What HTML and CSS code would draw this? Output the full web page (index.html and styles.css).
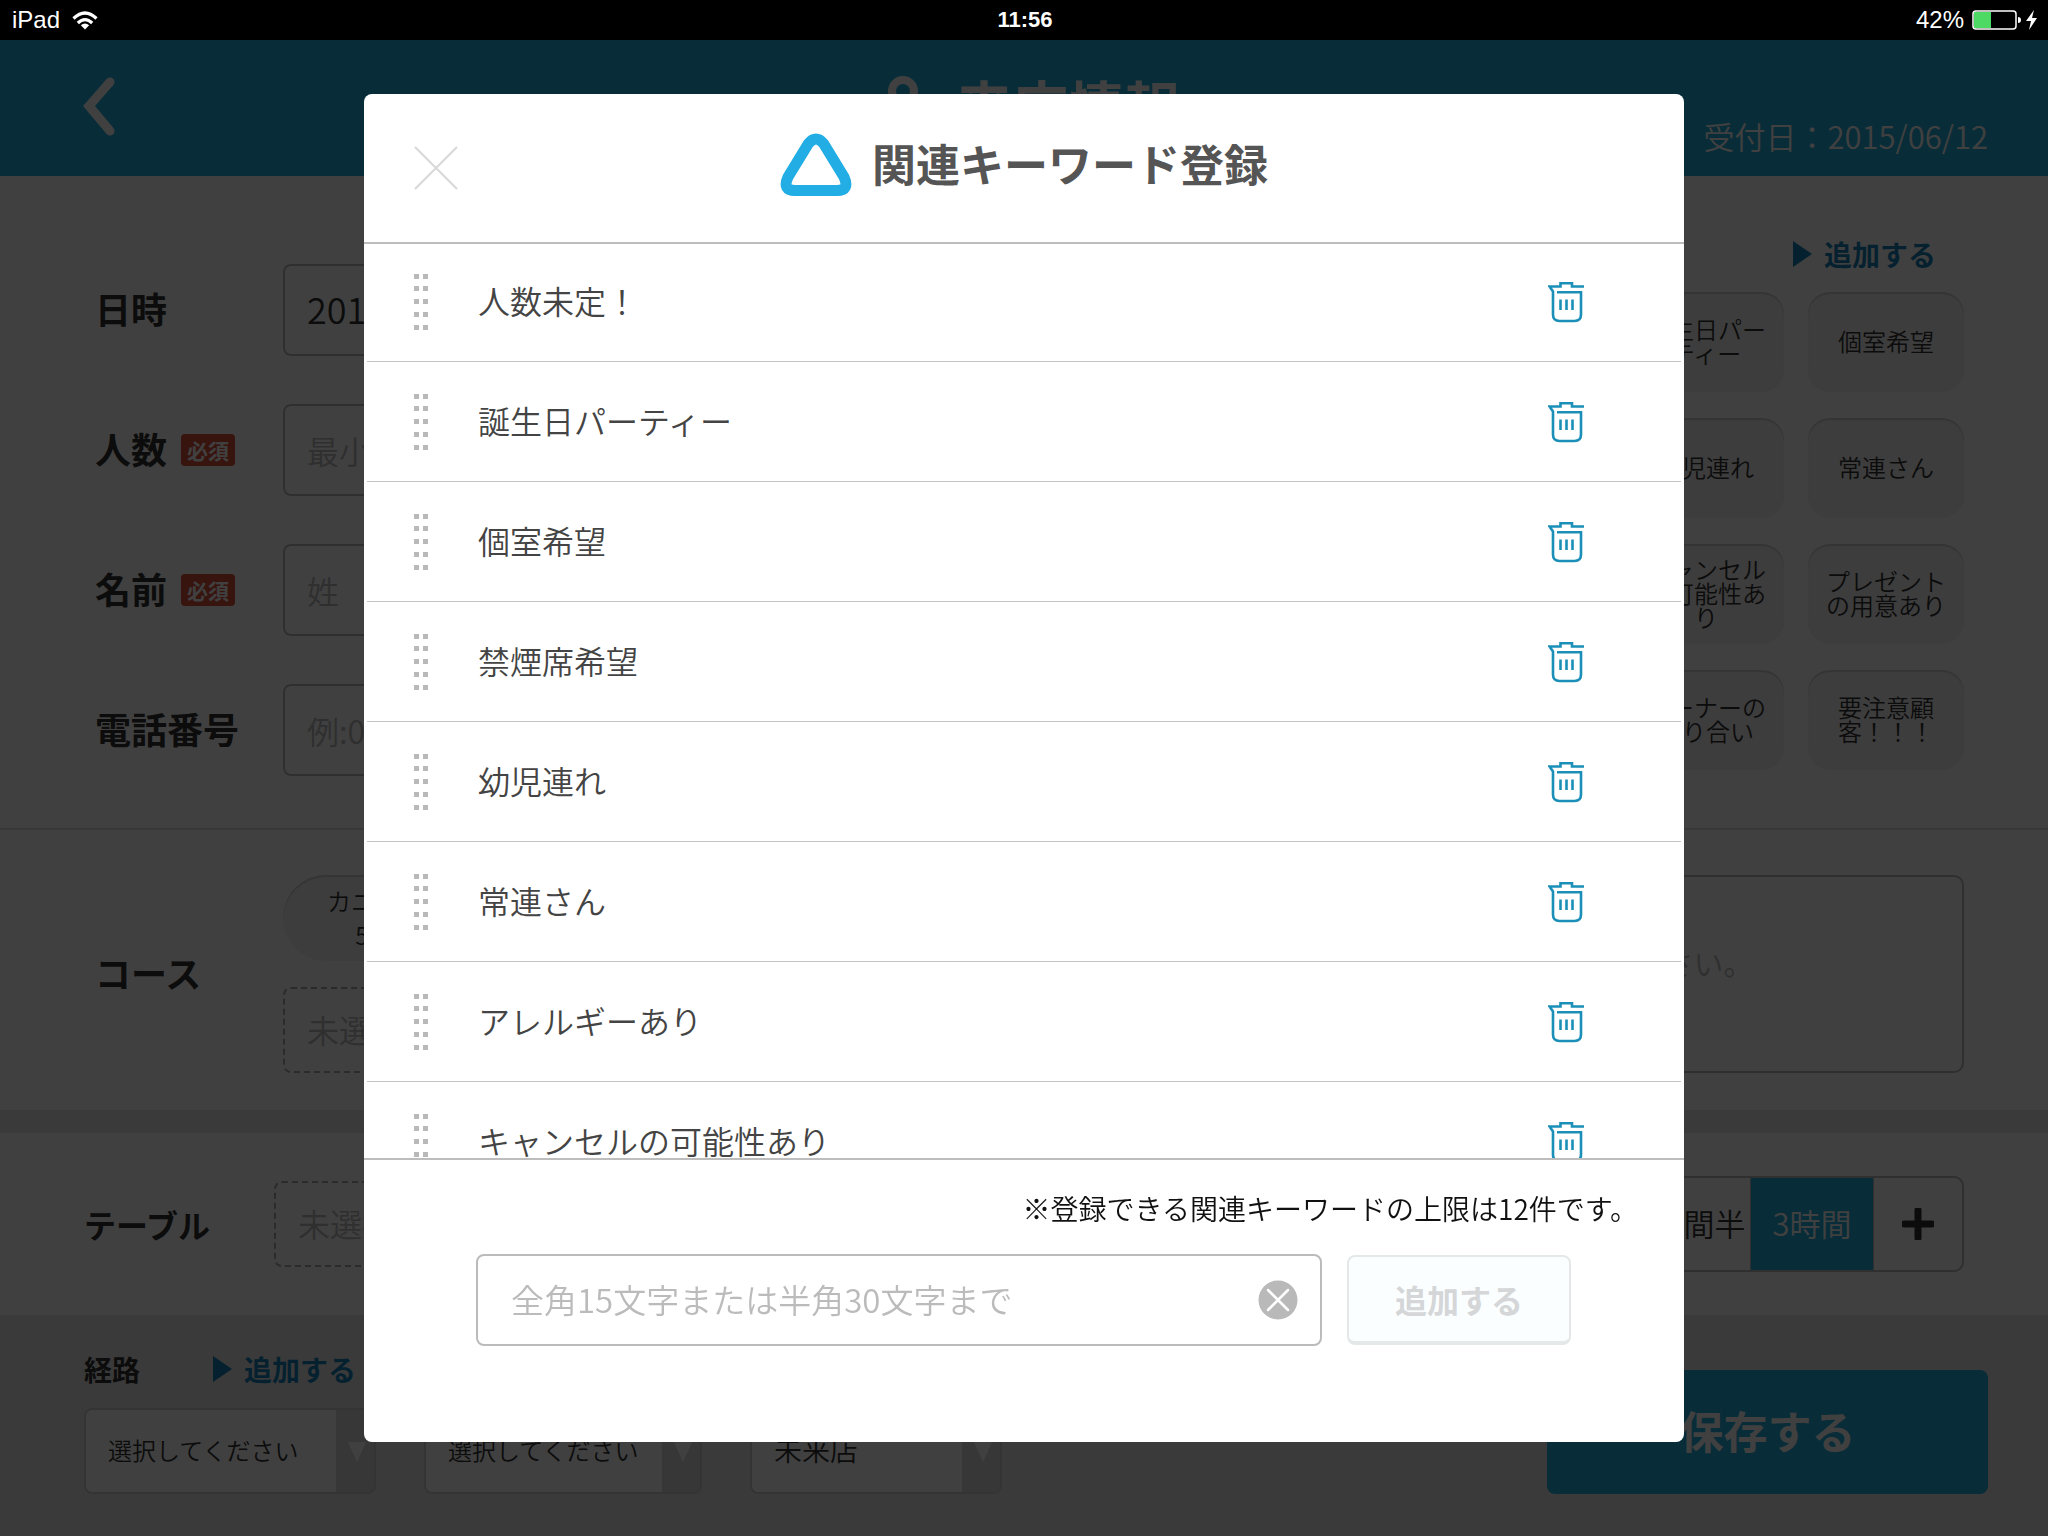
FILE: index.html
```html
<!DOCTYPE html>
<html lang="ja">
<head>
  <meta charset="UTF-8">
  <meta name="viewport" content="width=device-width, initial-scale=1.0">
  <title>関連キーワード登録</title>
  <link rel="stylesheet" href="styles.css">
</head>
<body>

<!-- icons used more than once -->
<svg class="sprite" aria-hidden="true">
  <symbol id="icon-handle" viewBox="0 0 16 58">
    <path fill="#b9b9b9" d="M1 1h5v5H1zM10 1h5v5h-5zM1 13h5v5H1zM10 13h5v5h-5zM1 26h5v5H1zM10 26h5v5h-5zM1 39h5v5H1zM10 39h5v5h-5zM1 52h5v5H1zM10 52h5v5h-5z"/>
  </symbol>
  <symbol id="icon-trash" viewBox="0 0 36 42">
    <g fill="none" stroke="#1b8fb8" stroke-width="2.6">
      <path d="M36 5.5H24V2.2H12.500V5.500H1.500L5 10.500V33.500Q5 40 11.500 40H26.500Q33 40 33 33.500V11.200H9"/>
      <path d="M12.500 18.500v10.500M18.500 18.500v10.500M24.500 18.500v10.500"/>
    </g>
  </symbol>
</svg>

<div class="status-bar">
  <div class="status-side">
    <span>iPad</span>
    <svg class="wifi" width="26" height="19" viewBox="0 0 26 19">
      <g fill="none" stroke="#fff" stroke-width="3.200">
        <path d="M1.500 7.500Q13 -3.500 24.500 7.500"/>
        <path d="M5.800 12Q13 5.200 20.200 12"/>
      </g>
      <path fill="#fff" d="M8.800 14.200Q13 10.600 17.200 14.200L13 18.600z"/>
    </svg>
  </div>
  <div class="status-time">11:56</div>
  <div class="status-side status-right">
    <span>42%</span>
    <svg width="66" height="22" viewBox="0 0 66 22">
      <rect x="1" y="2" width="43" height="18" rx="3" fill="none" stroke="#fff" stroke-width="1.500"/>
      <rect x="2" y="3" width="17" height="16" fill="#4cd964"/>
      <path fill="#fff" d="M46 8q3 0 3 3t-3 3zM62 1l-8 11h5l-2 9 8-12h-5z"/>
    </svg>
  </div>
</div>

<header class="header">
  <button class="back" type="button" aria-label="戻る">
    <svg width="34" height="64" viewBox="0 0 34 64"><path d="M28 6L7 30l21 25" fill="none" stroke="#fff" stroke-width="9" stroke-linecap="round"/></svg>
  </button>
  <h1 class="header-title">
    <svg width="70" height="60" viewBox="0 0 70 60"><g fill="none" stroke="#fff" stroke-width="8"><circle cx="35" cy="17" r="11"/><path d="M12 56q0-22 23-22t23 22z"/></g></svg>
    来店情報
  </h1>
  <p class="header-date">受付日：2015/06/12</p>
</header>

<main>
  <section class="panel guest">
    <div class="fields">
      <div class="field"><label class="name" for="date">日時</label><input id="date" class="box" type="text" value="2015/06/12"></div>
      <div class="field"><label class="name" for="people">人数<span class="required">必須</span></label><input id="people" class="box" type="text" placeholder="最小"></div>
      <div class="field"><label class="name" for="guest">名前<span class="required">必須</span></label><input id="guest" class="box" type="text" placeholder="姓"></div>
      <div class="field"><label class="name" for="tel">電話番号</label><input id="tel" class="box" type="tel" placeholder="例:09012345678"></div>
    </div>
    <div class="tags">
      <a class="add-link" href="#">追加する</a>
      <div class="tag-grid">
        <button class="tag" type="button">誕生日パーティー</button>
        <button class="tag" type="button">個室希望</button>
        <button class="tag" type="button">幼児連れ</button>
        <button class="tag" type="button">常連さん</button>
        <button class="tag" type="button">キャンセルの可能性あり</button>
        <button class="tag" type="button">プレゼントの用意あり</button>
        <button class="tag" type="button">オーナーの知り合い</button>
        <button class="tag" type="button">要注意顧客！！！</button>
      </div>
    </div>
  </section>

  <section class="panel course">
    <div class="name">コース</div>
    <div class="course-list">
      <button class="course-chip" type="button">カニづくし<br>500円</button>
      <button class="dashed" type="button">未選択</button>
    </div>
    <textarea class="memo" aria-label="備考" placeholder="こちらにご要望・備考を入力してください。"></textarea>
  </section>

  <section class="panel table-row">
    <div class="name">テーブル</div>
    <button class="dashed" type="button">未選択</button>
    <div class="hours">
      <button class="hour" type="button">2時間半</button>
      <button class="hour selected" type="button">3時間</button>
      <button class="hour plus" type="button" aria-label="追加">
        <svg width="32" height="32" viewBox="0 0 32 32"><path d="M16 2v28M2 16h28" stroke="#333" stroke-width="7" stroke-linecap="round"/></svg>
      </button>
    </div>
  </section>
</main>

<footer class="footer">
  <div class="routes">
    <div class="route-head"><h2 class="route-title">経路</h2><a class="add-link" href="#">追加する</a></div>
    <div class="selects">
      <div class="select"><select aria-label="経路"><option>選択してください</option></select></div>
      <div class="select medium"><select aria-label="担当"><option>選択してください</option></select></div>
      <div class="select small"><select aria-label="来店状況"><option>未来店</option></select></div>
    </div>
  </div>
  <button class="save" type="button">保存する</button>
</footer>

<div class="overlay">
  <div class="modal" role="dialog" aria-modal="true" aria-labelledby="modal-title">
    <div class="modal-header">
      <button class="close" type="button" aria-label="閉じる">
        <svg width="44" height="44" viewBox="0 0 44 44"><path d="M1 1l42 42M43 1L1 43" stroke="#d8d8d8" stroke-width="2"/></svg>
      </button>
      <svg width="72" height="66" viewBox="0 0 72 66"><path d="M28.500 11.500Q36 2.500 43.500 11.500L64 45Q70 58.500 57 58.500H15Q2 58.500 8 45z" fill="none" stroke="#22ade4" stroke-width="11"/></svg>
      <h2 class="modal-title" id="modal-title">関連キーワード登録</h2>
    </div>

    <ul class="keywords">
      <li class="keyword"><svg class="handle"><use href="#icon-handle"/></svg><span class="word">人数未定！</span><button class="delete" type="button" aria-label="削除"><svg class="trash"><use href="#icon-trash"/></svg></button></li>
      <li class="keyword"><svg class="handle"><use href="#icon-handle"/></svg><span class="word">誕生日パーティー</span><button class="delete" type="button" aria-label="削除"><svg class="trash"><use href="#icon-trash"/></svg></button></li>
      <li class="keyword"><svg class="handle"><use href="#icon-handle"/></svg><span class="word">個室希望</span><button class="delete" type="button" aria-label="削除"><svg class="trash"><use href="#icon-trash"/></svg></button></li>
      <li class="keyword"><svg class="handle"><use href="#icon-handle"/></svg><span class="word">禁煙席希望</span><button class="delete" type="button" aria-label="削除"><svg class="trash"><use href="#icon-trash"/></svg></button></li>
      <li class="keyword"><svg class="handle"><use href="#icon-handle"/></svg><span class="word">幼児連れ</span><button class="delete" type="button" aria-label="削除"><svg class="trash"><use href="#icon-trash"/></svg></button></li>
      <li class="keyword"><svg class="handle"><use href="#icon-handle"/></svg><span class="word">常連さん</span><button class="delete" type="button" aria-label="削除"><svg class="trash"><use href="#icon-trash"/></svg></button></li>
      <li class="keyword"><svg class="handle"><use href="#icon-handle"/></svg><span class="word">アレルギーあり</span><button class="delete" type="button" aria-label="削除"><svg class="trash"><use href="#icon-trash"/></svg></button></li>
      <li class="keyword"><svg class="handle"><use href="#icon-handle"/></svg><span class="word">キャンセルの可能性あり</span><button class="delete" type="button" aria-label="削除"><svg class="trash"><use href="#icon-trash"/></svg></button></li>
    </ul>

    <form class="modal-footer">
      <label class="note" for="keyword">※登録できる関連キーワードの上限は12件です。</label>
      <div class="entry">
        <div class="entry-box">
          <input id="keyword" type="text" placeholder="全角15文字または半角30文字まで">
          <button class="clear" type="reset" aria-label="クリア">
            <svg width="40" height="40" viewBox="0 0 40 40"><circle cx="20" cy="20" r="19.500" fill="#b9b9b9"/><path d="M10 10l20 20M30 10L10 30" stroke="#fff" stroke-width="2.500" stroke-linecap="round"/></svg>
          </button>
        </div>
        <button class="add" type="submit" disabled>追加する</button>
      </div>
    </form>
  </div>
</div>

</body>
</html>
```

FILE: styles.css
```css
* {
  box-sizing: border-box;
}

body {
  margin: 0;
  min-height: 100vh;
  display: flex;
  flex-direction: column;
  background: #e8e8e8;
  color: #333;
  font-family: "Noto Sans CJK JP", sans-serif;
  font-size: 32px;
  font-weight: 350;
}

h1, h2, p, ul {
  margin: 0;
  padding: 0;
}

button, input, select, textarea {
  font: inherit;
  color: inherit;
  margin: 0;
}

button {
  border: 0;
  padding: 0;
  background: none;
}

svg {
  display: block;
  flex: none;
}

.sprite {
  position: absolute;
  width: 0;
  height: 0;
}

/* status bar */
.status-bar {
  position: relative;
  z-index: 2;
  height: 40px;
  padding: 0 10px 0 12px;
  display: flex;
  align-items: center;
  background: #000;
  color: #fff;
  font-family: "Liberation Sans", Arial, sans-serif;
  font-size: 24px;
  font-weight: 400;
}

.status-side {
  flex: 1;
  display: flex;
  align-items: center;
  gap: 12px;
}

.status-right {
  justify-content: flex-end;
  gap: 8px;
}

.status-time {
  font-size: 22px;
  font-weight: 700;
}

/* page header */
.header {
  height: 136px;
  padding: 0 60px;
  display: grid;
  grid-template-columns: 1fr auto 1fr;
  align-items: center;
  background: #20b0e0;
  color: #fff;
}

.back {
  justify-self: start;
  margin-left: 22px;
}

.header-title {
  display: flex;
  align-items: center;
  gap: 18px;
  padding-bottom: 8px;
  font-size: 56px;
  line-height: 64px;
}

.header-date {
  justify-self: end;
  align-self: end;
  padding-bottom: 18px;
  font-size: 31px;
  line-height: 44px;
}

/* form */
.panel {
  display: flex;
  background: #fff;
}

.name {
  width: 188px;
  flex: none;
  display: flex;
  align-items: center;
  gap: 14px;
  padding-bottom: 4px;
  font-size: 36px;
  font-weight: 700;
  white-space: nowrap;
}

.required {
  margin-top: 4px;
  padding: 0 6px;
  border-radius: 4px;
  background: #e0503c;
  color: #fff;
  font-size: 21px;
  line-height: 32px;
}

.guest {
  height: 654px;
  padding: 60px 84px 0 95px;
  justify-content: space-between;
  border-bottom: 2px solid #ddd;
}

.fields {
  padding-top: 28px;
  display: flex;
  flex-direction: column;
  gap: 48px;
}

.field {
  display: flex;
}

.box {
  width: 600px;
  height: 92px;
  padding: 0 22px 4px;
  border: 2px solid #bbb;
  border-radius: 8px;
  background: #fff;
  font-size: 36px;
}

::placeholder {
  color: #bbb;
  opacity: 1;
}

.box::placeholder {
  font-size: 32px;
}

.add-link {
  display: inline-flex;
  align-items: center;
  gap: 12px;
  color: #1585bb;
  font-size: 28px;
  font-weight: 700;
  line-height: 36px;
  text-decoration: none;
}

.add-link::before {
  content: "";
  border: solid transparent;
  border-width: 13px 0 13px 19px;
  border-left-color: #1585bb;
}

.tags {
  display: flex;
  flex-direction: column;
  align-items: flex-end;
  gap: 20px;
}

.tags .add-link {
  margin-right: 28px;
}

.tag-grid {
  display: grid;
  grid-template-columns: 156px 156px;
  gap: 26px 24px;
}

.tag {
  height: 100px;
  padding: 0 17px 2px;
  border-radius: 22px;
  background: #f2f2f2;
  box-shadow: inset 0 2px 1px #d0d0d0;
  font-size: 24px;
  line-height: 24px;
}

.course {
  height: 280px;
  padding: 45px 84px 37px 95px;
}

.course-list {
  width: 400px;
  display: flex;
  flex-direction: column;
  gap: 26px;
}

.course-chip {
  width: 208px;
  height: 86px;
  border-radius: 43px;
  background: #f2f2f2;
  box-shadow: inset 0 2px 1px #d0d0d0;
  font-size: 24px;
  line-height: 34px;
}

.dashed {
  width: 400px;
  height: 86px;
  padding: 0 22px 2px;
  border: 2px dashed #aaa;
  border-radius: 8px;
  color: #bbb;
  text-align: left;
}

.memo {
  width: 834px;
  margin-left: auto;
  padding: 63px 24px 0;
  border: 2px solid #bbb;
  border-radius: 10px;
  resize: none;
  font-size: 30px;
  line-height: 44px;
}

.table-row {
  margin-top: 23px;
  height: 182px;
  padding: 0 84px;
  align-items: center;
}

.table-row .name {
  width: 190px;
  padding: 0;
  font-size: 32px;
}

.hours {
  height: 96px;
  margin-left: auto;
  display: flex;
  border: 2px solid #bbb;
  border-radius: 10px;
  overflow: hidden;
}

.hour {
  width: 123px;
  padding-bottom: 4px;
  border-right: 1px solid #bbb;
  font-size: 31px;
  white-space: nowrap;
}

.hour:first-child {
  width: 120px;
}

.hour.selected {
  background: #20b0e0;
  color: #fff;
}

.hour.plus {
  width: 88px;
  padding: 0;
  border: 0;
  display: flex;
  align-items: center;
  justify-content: center;
}

/* footer */
.footer {
  flex: 1;
  padding: 34px 60px 42px 84px;
  display: flex;
  justify-content: space-between;
}

.route-head {
  display: flex;
  align-items: center;
  gap: 73px;
}

.route-title {
  font-size: 28px;
  line-height: 40px;
}

.selects {
  display: flex;
  gap: 48px;
  padding-top: 19px;
}

.select {
  position: relative;
  width: 292px;
}

.select::after {
  content: "";
  position: absolute;
  right: 10px;
  top: 34px;
  border: solid transparent;
  border-width: 20px 9px 0;
  border-top-color: #fff;
}

.select.medium {
  width: 278px;
}

.select.small {
  width: 252px;
}

.select select {
  appearance: none;
  width: 100%;
  height: 86px;
  padding: 0 22px 4px;
  border: 2px solid #d0d0d0;
  border-radius: 8px;
  background: linear-gradient(#dcdcdc, #dcdcdc) right / 38px 100% no-repeat #fff;
  font-size: 24px;
}

.select.small select {
  font-size: 28px;
}

.save {
  width: 441px;
  height: 124px;
  margin-top: 21px;
  padding-bottom: 4px;
  border-radius: 8px;
  background: #20b0e0;
  color: #fff;
  font-size: 44px;
  font-weight: 700;
}

/* modal */
.overlay {
  position: fixed;
  inset: 0;
  display: flex;
  justify-content: center;
  padding: 94px 20px;
  background: rgba(0, 0, 0, 0.75);
}

.modal {
  width: 100%;
  max-width: 1320px;
  display: flex;
  flex-direction: column;
  overflow: hidden;
  border-radius: 8px;
  background: #fff;
  color: #444;
}

.modal-header {
  position: relative;
  z-index: 1;
  flex: none;
  height: 148px;
  padding-bottom: 6px;
  display: flex;
  align-items: center;
  justify-content: center;
  gap: 20px;
  box-shadow: 0 2px 0 #bdbdbd;
}

.close {
  position: absolute;
  left: 50px;
  top: 52px;
}

.modal-title {
  padding-bottom: 4px;
  color: #555;
  font-size: 44px;
  line-height: 64px;
}

.keywords {
  flex: 1;
  min-height: 0;
  padding: 0 3px;
  overflow-y: auto;
  scrollbar-width: none;
  list-style: none;
}

.keyword {
  height: 120px;
  padding: 0 97px 0 46px;
  display: flex;
  align-items: center;
  border-bottom: 1px solid #c4c4c4;
}

.handle {
  width: 16px;
  height: 58px;
  margin-right: 49px;
}

.word {
  padding-bottom: 4px;
}

.delete {
  margin-left: auto;
}

.trash {
  width: 36px;
  height: 42px;
}

.modal-footer {
  flex: none;
  height: 284px;
  padding: 28px 46px 0 112px;
  border-top: 2px solid #bdbdbd;
}

.note {
  display: block;
  color: #111;
  font-size: 28px;
  line-height: 40px;
  text-align: right;
}

.entry {
  display: flex;
  align-items: center;
  gap: 25px;
  padding: 26px 67px 0 0;
}

.entry-box {
  flex: 1;
  height: 92px;
  padding: 0 22px 0 33px;
  display: flex;
  align-items: center;
  border: 2px solid #bbb;
  border-radius: 8px;
}

.entry-box input {
  flex: 1;
  min-width: 0;
  padding: 0 0 2px;
  border: 0;
  outline: 0;
  background: none;
  font-size: 33px;
}

.add {
  width: 224px;
  height: 90px;
  border: 2px solid #e4e8e8;
  border-bottom-width: 4px;
  border-radius: 8px;
  background: #fbfeff;
  color: #d4d6d8;
  font-weight: 700;
}
```
